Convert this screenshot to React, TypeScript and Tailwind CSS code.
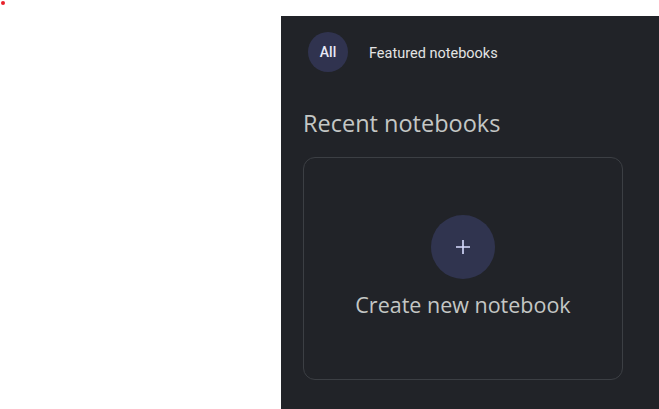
import * as React from "react";

export default function App() {
  return (
    <div className="relative h-[409px] w-[659px] overflow-hidden bg-white font-['Roboto',sans-serif]">
      <div className="absolute left-[1px] top-[1px] h-[4px] w-[4px] rounded-full bg-[#e8202a]" />
      <div className="flex h-full pt-4 pl-[281px]">
        <div className="flex-1 bg-[#212328] pl-[22px]">
          {/* filter chips */}
          <div className="flex items-center gap-[21px] pt-4 pl-[5px]">
            <div className="flex h-10 w-10 items-center justify-center rounded-full bg-[#30334f] pt-px text-[14px] font-medium text-[#e8eaf6]">
              All
            </div>
            <span className="mt-[3px] text-[14.5px] text-[#e3e3e3]">Featured notebooks</span>
          </div>

          <h2 className="mt-[37px] text-[23.5px] leading-7 text-[#c4c7c5] font-['Open_Sans',sans-serif]">
            Recent notebooks
          </h2>

          <div className="mt-5 flex h-[223px] w-[320px] flex-col items-center rounded-xl border border-[#3c3f44]">
            <div className="mt-[57px] flex h-16 w-16 items-center justify-center rounded-full bg-[#30344f]">
              <svg width="18" height="18" viewBox="0 0 18 18" fill="none">
                <path d="M9 2v14M2 9h14" stroke="#d8dcff" strokeWidth="1.6" />
              </svg>
            </div>
            <span className="mt-[12px] text-[21.5px] leading-7 text-[#c4c7c5] font-['Open_Sans',sans-serif]">
              Create new notebook
            </span>
          </div>
        </div>
      </div>
    </div>
  );
}
